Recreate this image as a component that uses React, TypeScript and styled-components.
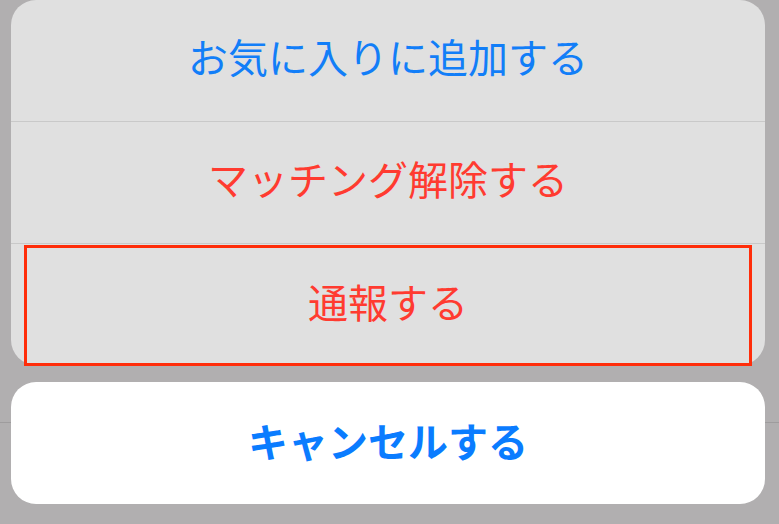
import React from 'react';
import styled, { createGlobalStyle } from 'styled-components';

const GlobalStyle = createGlobalStyle`
  html, body {
    margin: 0;
    padding: 0;
    background-color: #b1afb0;
  }
  body {
    font-family: "Noto Sans CJK JP", "Noto Sans", sans-serif;
  }
`;

type Tone = 'blue' | 'red';

const toneColor = (tone: Tone) => (tone === 'red' ? '#ff3b30' : '#127ef8');

const actions: { label: string; tone: Tone; flagged?: boolean }[] = [
  { label: 'お気に入りに追加する', tone: 'blue' },
  { label: 'マッチング解除する', tone: 'red' },
  { label: '通報する', tone: 'red', flagged: true },
];

const App: React.FC = () => {
  return (
    <>
      <GlobalStyle />
      <Screen>
        <ActionGroup>
          {actions.map((action, i) => (
            <ActionRow key={action.label} $first={i === 0}>
              {action.flagged ? (
                <FlagBox>
                  <ActionLabel $tone={action.tone}>{action.label}</ActionLabel>
                </FlagBox>
              ) : (
                <ActionLabel $tone={action.tone}>{action.label}</ActionLabel>
              )}
            </ActionRow>
          ))}
        </ActionGroup>
        <CancelButton>
          <CancelLabel>キャンセルする</CancelLabel>
        </CancelButton>
      </Screen>
    </>
  );
};

const Screen = styled.div`
  width: 779px;
  height: 524px;
  box-sizing: border-box;
  padding: 0 14px 0 11px;
  display: flex;
  flex-direction: column;
  gap: 17px;
  background: linear-gradient(
    to bottom,
    transparent 422px,
    #9e9c9d 422px,
    #9e9c9d 423px,
    transparent 423px
  );
`;

const ActionGroup = styled.div`
  display: flex;
  flex-direction: column;
  background-color: #e0e0e0;
  border-radius: 25px;
`;

const ActionRow = styled.div<{ $first: boolean }>`
  height: 121px;
  display: flex;
  align-items: center;
  justify-content: center;
  border-top: ${(p) => (p.$first ? 'none' : '1px solid #c9c9c9')};
`;

const FlagBox = styled.div`
  align-self: stretch;
  flex: 1;
  margin: 1px 13px -1px;
  border: 3px solid #ff2d0a;
  display: flex;
  align-items: center;
  justify-content: center;
`;

const ActionLabel = styled.span<{ $tone: Tone }>`
  font-size: 40px;
  line-height: 1;
  font-weight: 400;
  margin-bottom: 9px;
  color: ${(p) => toneColor(p.$tone)};
`;

const CancelButton = styled.div`
  height: 122px;
  display: flex;
  align-items: center;
  justify-content: center;
  background-color: #ffffff;
  border-radius: 25px;
`;

const CancelLabel = styled.span`
  font-size: 40px;
  line-height: 1;
  font-weight: 700;
  margin-bottom: 6px;
  color: #0a7cff;
`;

export default App;
